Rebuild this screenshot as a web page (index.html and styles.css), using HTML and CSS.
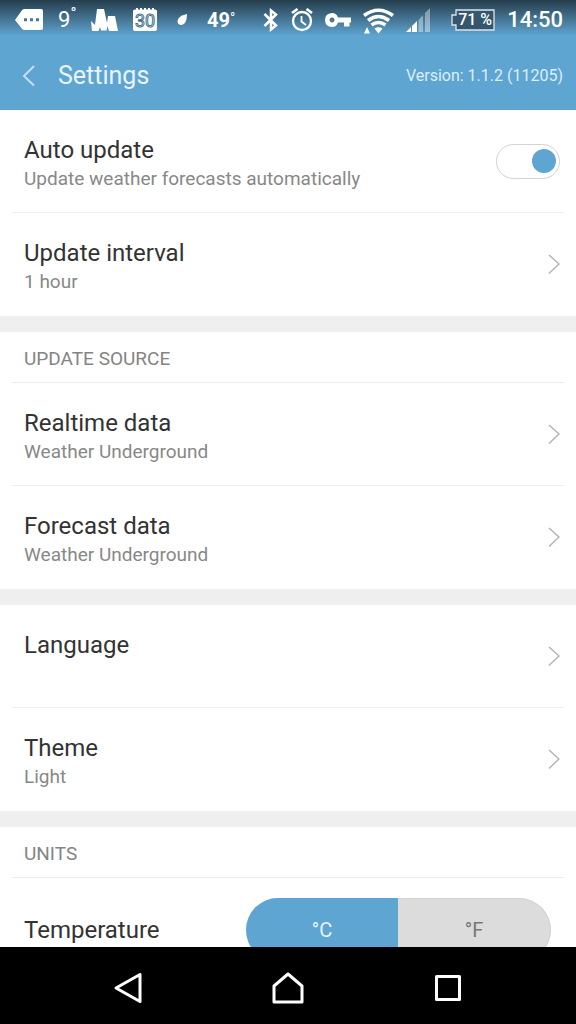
FILE: index.html
```html
<!DOCTYPE html>
<html lang="en">
<head>
<meta charset="utf-8">
<meta name="viewport" content="width=device-width, initial-scale=1">
<title>Settings</title>
<link rel="stylesheet" href="styles.css">
</head>
<body>
<header class="top">
  <div class="status">
    <div class="status-left">
      <svg width="28" height="22" viewBox="0 0 28 22" fill="#fff"><path fill-rule="evenodd" d="M0 11L7 1.200Q8 0 9.500 0H26Q28 0 28 2V19Q28 21 26 21H9.500Q8 21 7 19.800ZM9 9.300V12.300H12V9.300ZM15 9.300V12.300H18V9.300ZM21 9.300V12.300H24V9.300Z"/></svg>
      <span class="degrees">9<sup>°</sup></span>
      <svg width="27" height="24" viewBox="0 0 27 24" fill="#fff"><path d="M1 23L0 13 4 17 6 1H13L16 15 17 8H24L27 23H18L16.500 18 15.500 22.500H10L9 19 7.500 23Z"/></svg>
      <svg class="calendar" width="24" height="24" viewBox="0 0 24 24"><path fill="#fff" d="M0 3Q0 1.500 2 1.500H3V0H5V1.500H7V0H9V1.500H11V0H13V1.500H15V0H17V1.500H19V0H21V1.500H22Q24 1.500 24 3V21Q24 23 22 23H2Q0 23 0 21Z"/><text class="calendar-day" x="12" y="19" text-anchor="middle">30</text></svg>
      <svg width="20" height="22" viewBox="0 0 20 22" fill="#fff"><path d="M15 5Q14.800 15.500 9.500 16 5.500 16 5.500 12 6 7 15 5Z"/></svg>
      <span class="degrees strong">49<sup>°</sup></span>
    </div>
    <div class="status-right">
      <svg width="16" height="24" viewBox="0 0 16 24" fill="none" stroke="#fff" stroke-width="2.500"><path d="M1.500 6L13 17.500 8 21.500V2.500L13 6.500 1.500 18"/></svg>
      <svg width="22" height="24" viewBox="0 0 22 24" fill="none" stroke="#fff" stroke-width="2.300"><circle cx="11" cy="13" r="9"/><path stroke-width="1.800" d="M10.500 8V13.500L15 17"/><path stroke-width="2.600" d="M1 5L6.500 1M21 5L15.500 1"/></svg>
      <svg width="26" height="16" viewBox="0 0 26 16" fill="#fff"><path fill-rule="evenodd" d="M7 1Q11.500 1 13 5.500H26V10.500H24.500V14.500H19V10.500H13Q11.500 15 7 15 0 14.500 0 8 0 1.500 7 1ZM7 5.500A2.500 2.500 0 1 0 7.100 5.500Z"/></svg>
      <svg class="wifi" width="31" height="27" viewBox="0 0 31 27" fill="none" stroke="#fff" stroke-width="3.600"><path d="M1 8.500Q15.500-2 30 8.500M5 13.500Q15.500 5.500 26 13.500M8.500 18Q15.500 13 22.500 18"/><path fill="#fff" stroke="none" d="M11.500 21.500Q15.500 19 19.500 21.500L15.500 26.500ZM1 26.500L4 20 7 26.500Z"/></svg>
      <svg class="signal" width="33" height="25" viewBox="0 0 33 25" fill="#fff"><path d="M0 24L5 19V24ZM6 24V18L11 13V24Z"/><path opacity=".4" d="M12.500 24V12L17 7V24ZM19 24V5L24 0V24Z"/></svg>
      <span class="battery">
        <svg width="44" height="22" viewBox="0 0 44 22"><path fill="#35566c" stroke="#dce5eb" stroke-width="1.300" d="M5 1H43V21H5V16H1V6H5Z"/></svg>
        <span class="battery-text">71 %</span>
      </span>
      <time class="clock">14:50</time>
    </div>
  </div>
  <div class="bar">
    <button class="back" aria-label="Back"><svg width="14" height="22" viewBox="0 0 14 22" fill="none" stroke="#c4def0" stroke-width="2"><path d="M12 1L2 11 12 20.500"/></svg></button>
    <h1 class="title">Settings</h1>
    <span class="version">Version: 1.1.2 (11205)</span>
  </div>
</header>

<main class="content">
  <section class="group">
    <label class="row">
      <span class="text"><span class="name">Auto update</span><span class="detail">Update weather forecasts automatically</span></span>
      <input class="switch" type="checkbox" role="switch" checked>
    </label>
    <button class="row">
      <span class="text"><span class="name">Update interval</span><span class="detail">1 hour</span></span>
      <svg class="chevron" viewBox="0 0 12 22"><path d="M1 2L11 11 1 20.500"/></svg>
    </button>
  </section>
  <section class="group">
    <h2 class="heading">UPDATE SOURCE</h2>
    <button class="row">
      <span class="text"><span class="name">Realtime data</span><span class="detail">Weather Underground</span></span>
      <svg class="chevron" viewBox="0 0 12 22"><path d="M1 2L11 11 1 20.500"/></svg>
    </button>
    <button class="row">
      <span class="text"><span class="name">Forecast data</span><span class="detail">Weather Underground</span></span>
      <svg class="chevron" viewBox="0 0 12 22"><path d="M1 2L11 11 1 20.500"/></svg>
    </button>
  </section>
  <section class="group">
    <button class="row">
      <span class="text"><span class="name">Language</span><span class="detail"></span></span>
      <svg class="chevron" viewBox="0 0 12 22"><path d="M1 2L11 11 1 20.500"/></svg>
    </button>
    <button class="row">
      <span class="text"><span class="name">Theme</span><span class="detail">Light</span></span>
      <svg class="chevron" viewBox="0 0 12 22"><path d="M1 2L11 11 1 20.500"/></svg>
    </button>
  </section>
  <section class="group">
    <h2 class="heading">UNITS</h2>
    <div class="row unit">
      <span class="name">Temperature</span>
      <div class="segments" role="group" aria-label="Temperature">
        <button class="segment selected" aria-pressed="true">°C</button>
        <button class="segment" aria-pressed="false">°F</button>
      </div>
    </div>
  </section>
</main>

<nav class="nav">
  <button class="nav-button" aria-label="Back"><svg width="32" height="32" viewBox="0 0 32 32"><path d="M4 16L28 2.500V29.500Z"/></svg></button>
  <button class="nav-button" aria-label="Home"><svg width="32" height="32" viewBox="0 0 32 32"><path d="M16 2L30 14V30H2V14Z"/></svg></button>
  <button class="nav-button" aria-label="Recent apps"><svg width="32" height="32" viewBox="0 0 32 32"><path d="M4.500 4.500H27.500V27.500H4.500Z"/></svg></button>
</nav>
</body>
</html>
```

FILE: styles.css
```css
* {
  box-sizing: border-box;
}

body {
  margin: 0;
  height: 100vh;
  display: flex;
  flex-direction: column;
  overflow: hidden;
  background: #fff;
  font-family: Roboto, "Liberation Sans", sans-serif;
  color: #333;
}

button {
  margin: 0;
  padding: 0;
  border: 0;
  background: none;
  font: inherit;
  color: inherit;
  text-align: left;
}

svg {
  display: block;
  flex: none;
}

.top {
  flex: none;
  color: #fff;
  background: linear-gradient(#253d4c 0, #2c495b 4px, #5fa5d2 36px);
}

.status {
  height: 40px;
  padding: 0 13px 0 15px;
  display: flex;
  align-items: center;
  justify-content: space-between;
}

.status-left,
.status-right {
  display: flex;
  align-items: center;
}

.status-left {
  gap: 15px;
}

.status-right {
  gap: 12px;
}

.degrees {
  display: flex;
  align-items: flex-start;
  width: 18px;
  font-size: 22px;
  line-height: 24px;
}

.degrees sup {
  font-size: 16px;
  line-height: 12px;
}

.strong {
  width: 29px;
  font-size: 20px;
  font-weight: 700;
}

.strong sup {
  font-size: 14px;
  font-weight: 400;
  line-height: 20px;
}

.calendar-day {
  font-size: 18px;
  fill: #fff;
  stroke: #3f7193;
  stroke-width: 1px;
}

.battery {
  display: grid;
  place-items: center;
}

.battery > * {
  grid-area: 1 / 1;
}

.battery-text {
  padding-left: 4px;
  font-size: 16px;
  font-weight: 500;
  line-height: 20px;
}

.clock {
  font-size: 22px;
  font-weight: 500;
  line-height: 24px;
}

.bar {
  min-height: 70px;
  padding: 2px 13px 0 22px;
  display: flex;
  align-items: center;
}

.back {
  width: 36px;
}

.title {
  flex: 1;
  margin: 0;
  font-size: 25px;
  font-weight: 400;
  line-height: 30px;
  color: #e8f3fa;
}

.version {
  font-size: 16px;
  line-height: 20px;
  color: #dceefa;
}

.content {
  flex: 1;
  min-height: 0;
  overflow: hidden;
  display: flex;
  flex-direction: column;
  gap: 16px;
  background: #efefef;
}

.group {
  flex: none;
  padding: 0 12px;
  background: #fff;
}

.heading {
  margin: 0;
  padding: 14px 12px 10px;
  border-bottom: 1px solid #ececec;
  font-size: 19px;
  font-weight: 400;
  line-height: 26px;
  color: #848484;
}

.row {
  width: 100%;
  min-height: 103px;
  padding: 0 4px 0 12px;
  display: flex;
  align-items: center;
  justify-content: space-between;
  border-bottom: 1px solid #efefef;
}

.row:last-child {
  border-bottom-color: transparent;
}

.text {
  padding-top: 9px;
  padding-bottom: 3px;
}

.name,
.detail {
  display: block;
}

.name {
  font-size: 24px;
  line-height: 30px;
}

.detail {
  min-height: 28px;
  font-size: 19px;
  line-height: 28px;
  color: #888;
}

.chevron {
  width: 12px;
  height: 22px;
  fill: none;
  stroke: #b4b4b4;
  stroke-width: 1.5;
}

.switch {
  appearance: none;
  flex: none;
  margin: 0;
  width: 64px;
  height: 35px;
  padding: 0 3px;
  display: flex;
  align-items: center;
  justify-content: flex-end;
  border: 1px solid #d2d2d2;
  border-radius: 18px;
  background: #fff;
}

.switch::before {
  content: "";
  width: 24px;
  height: 24px;
  border-radius: 50%;
  background: #5fa5d2;
}

.switch:not(:checked) {
  justify-content: flex-start;
}

.unit {
  padding-top: 2px;
  padding-right: 13px;
}

.segments {
  display: flex;
  width: 305px;
  height: 64px;
  overflow: hidden;
  border-radius: 32px;
  background: #dcdcdc;
}

.segment {
  flex: 1;
  border: 1px solid #d2d2d2;
  border-left: 0;
  border-radius: 0 32px 32px 0;
  font-size: 20px;
  text-align: center;
  color: #777;
}

.selected {
  border: 0;
  border-radius: 0;
  background: #5fa5d2;
  color: #e8f3fa;
}

.nav {
  flex: none;
  height: 77px;
  padding: 4px 48px 0;
  display: flex;
  background: #000;
}

.nav-button {
  flex: 1;
  display: flex;
  align-items: center;
  justify-content: center;
}

.nav svg {
  fill: none;
  stroke: #fff;
  stroke-width: 3;
  stroke-linejoin: round;
}
```
